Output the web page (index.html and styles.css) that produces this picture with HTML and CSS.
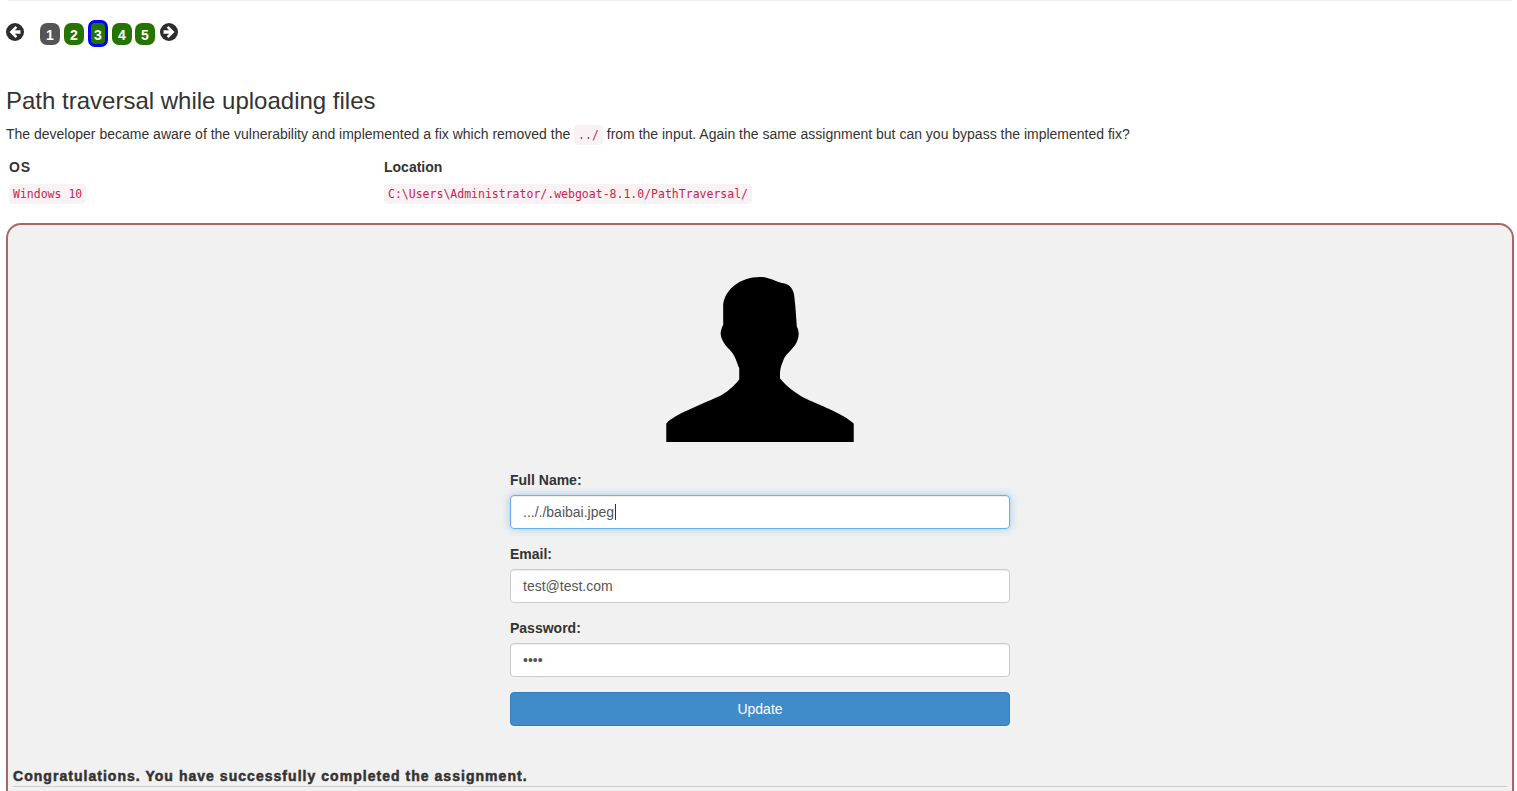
FILE: index.html
```html
<!DOCTYPE html>
<html lang="en">
<head>
    <meta charset="UTF-8">
    <title>Path traversal while uploading files</title>
    <link rel="stylesheet" href="styles.css">
</head>
<body>
    <div class="top-rule"></div>

    <!-- lesson pager -->
    <div class="pager">
        <svg class="arrow" viewBox="0 0 18 18"><circle cx="9" cy="9" r="9" fill="#2f2c2c"/><path d="M9.500 3 3.500 9l6 6 1.800-1.800-2.500-2.400h5.700V7.200H8.800l2.500-2.400z" fill="#fff"/></svg>
        <div class="pages">
            <span class="page page-current">1</span>
            <span class="page page-done">2</span>
            <span class="page page-done page-active">3</span>
            <span class="page page-done">4</span>
            <span class="page page-done">5</span>
        </div>
        <svg class="arrow" viewBox="0 0 18 18"><circle cx="9" cy="9" r="9" fill="#2f2c2c"/><path d="M8.500 3 14.500 9l-6 6-1.800-1.800 2.500-2.400H3.500V7.200h5.700L6.700 4.800z" fill="#fff"/></svg>
    </div>

    <h3 class="title">Path traversal while uploading files</h3>
    <p class="intro">The developer became aware of the vulnerability and implemented a fix which removed the <code>../</code> from the input. Again the same assignment but can you bypass the implemented fix?</p>

    <table class="info-table">
        <tr>
            <th class="col-os">OS</th>
            <th>Location</th>
        </tr>
        <tr>
            <td><code>Windows 10</code></td>
            <td><code>C:\Users\Administrator/.webgoat-8.1.0/PathTraversal/</code></td>
        </tr>
    </table>

    <!-- assignment -->
    <div class="attack-container">
        <svg class="avatar" viewBox="80 52 560 493"><path d="M80 545 80 490C100 465 180 435 235 410 260 398 285 375 298 358L298 325C290 305 285 285 270 270 250 250 240 230 243 215 245 205 248 200 250 195L250 135C255 90 300 52 360 52 385 52 405 65 425 70 450 72 462 90 463 115 466 140 468 170 470 200 478 215 478 235 465 255 450 275 435 285 430 300 425 315 418 325 420 355 440 380 470 400 490 412 530 432 610 460 640 490L640 545Z" fill="#000"/></svg>

        <form class="profile-form">
            <div class="form-group">
                <label>Full Name:</label>
                <div class="form-control form-control-focus">..././baibai.jpeg<span class="caret"></span></div>
            </div>
            <div class="form-group">
                <label>Email:</label>
                <input class="form-control" type="text" value="test@test.com">
            </div>
            <div class="form-group">
                <label>Password:</label>
                <input class="form-control" type="password" value="test">
            </div>
            <button type="button" class="btn-update">Update</button>
        </form>

        <div class="feedback">Congratulations. You have successfully completed the assignment.</div>
        <hr class="feedback-rule">
    </div>
</body>
</html>
```

FILE: styles.css
```css
html, body {
    height: 791px;
    overflow: hidden;
}

body {
    margin: 0;
    padding: 0 3px 0 6px;
    background-color: #fff;
    font-family: "Liberation Sans", Arial, sans-serif;
    font-size: 14px;
    line-height: 20px;
    color: #333;
}

.top-rule {
    height: 1px;
    margin: 0 2px 0 2px;
    background-color: #eee;
}

/* pager */
.pager {
    display: flex;
    align-items: flex-start;
    padding-top: 19px;
    height: 45px;
}

.arrow {
    width: 18px;
    height: 18px;
    margin-top: 3px;
}

.pages {
    display: flex;
    gap: 4px;
    margin: 0 5px 0 16px;
    align-items: flex-start;
}

.page {
    width: 20px;
    height: 22px;
    margin-top: 3px;
    border-radius: 7px;
    font-size: 14px;
    font-weight: bold;
    line-height: 24px;
    text-align: center;
    color: #fff;
}

.page:last-child {
    margin-left: -1px;
}

.page-current {
    background-color: #555;
}

.page-done {
    background-color: #267400;
}

.page-active {
    box-sizing: border-box;
    height: 27px;
    margin-top: 0;
    border: 3px solid #00f;
    line-height: 24px;
}

/* heading and intro */
.title {
    margin: 22px 0 0;
    font-size: 24px;
    font-weight: normal;
    line-height: 28px;
}

.intro {
    margin: 9px 0 0;
}

code {
    padding: 3px 4px;
    border-radius: 4px;
    background-color: #f9f2f4;
    font-family: "DejaVu Sans Mono", "Liberation Mono", monospace;
    font-size: 11.500px;
    color: #c7254e;
}

.info-table {
    margin-top: 9px;
    border-collapse: collapse;
}

.info-table th {
    padding: 3px 3px 2px;
    height: 20px;
    text-align: left;
    font-weight: bold;
}

.info-table td {
    padding: 4px 3px 3px;
    height: 20px;
}

.col-os {
    width: 369px;
    letter-spacing: 0.8px;
}

/* assignment box */
.attack-container {
    box-sizing: border-box;
    height: 640px;
    margin-top: 16px;
    padding: 52px 5px 0;
    border: 2px solid #a66;
    border-radius: 15px;
    background-color: #f1f1f1;
}

.avatar {
    display: block;
    width: 188px;
    height: 165px;
    margin: 0 auto;
}

.profile-form {
    width: 500px;
    margin: 28px auto 0;
}

.form-group {
    margin-bottom: 15px;
}

.form-group label {
    display: block;
    margin-bottom: 5px;
    font-weight: bold;
}

.form-control {
    display: block;
    box-sizing: border-box;
    width: 100%;
    height: 34px;
    padding: 6px 12px;
    border: 1px solid #ccc;
    border-radius: 4px;
    background-color: #fff;
    box-shadow: inset 0 1px 1px rgba(0, 0, 0, 0.075);
    font-family: inherit;
    font-size: 14px;
    line-height: 20px;
    color: #555;
}

.form-control-focus {
    border-color: #66afe9;
    box-shadow: inset 0 1px 1px rgba(0, 0, 0, 0.075), 0 0 8px rgba(102, 175, 233, 0.6);
}

.caret {
    display: inline-block;
    width: 1px;
    height: 16px;
    margin-left: 1px;
    background-color: #333;
    vertical-align: -3px;
}

.btn-update {
    display: block;
    width: 100%;
    height: 34px;
    border: 1px solid #357ebd;
    border-radius: 4px;
    background-color: #428bca;
    font-family: inherit;
    font-size: 14px;
    color: #fff;
}

.feedback {
    margin-top: 40px;
    font-size: 14px;
    font-weight: bold;
    line-height: 20px;
    letter-spacing: 1.035px;
    -webkit-text-stroke: 0.5px #333;
}

.feedback-rule {
    margin: 0;
    border: 0;
    border-top: 1px solid #ccc;
}
```
